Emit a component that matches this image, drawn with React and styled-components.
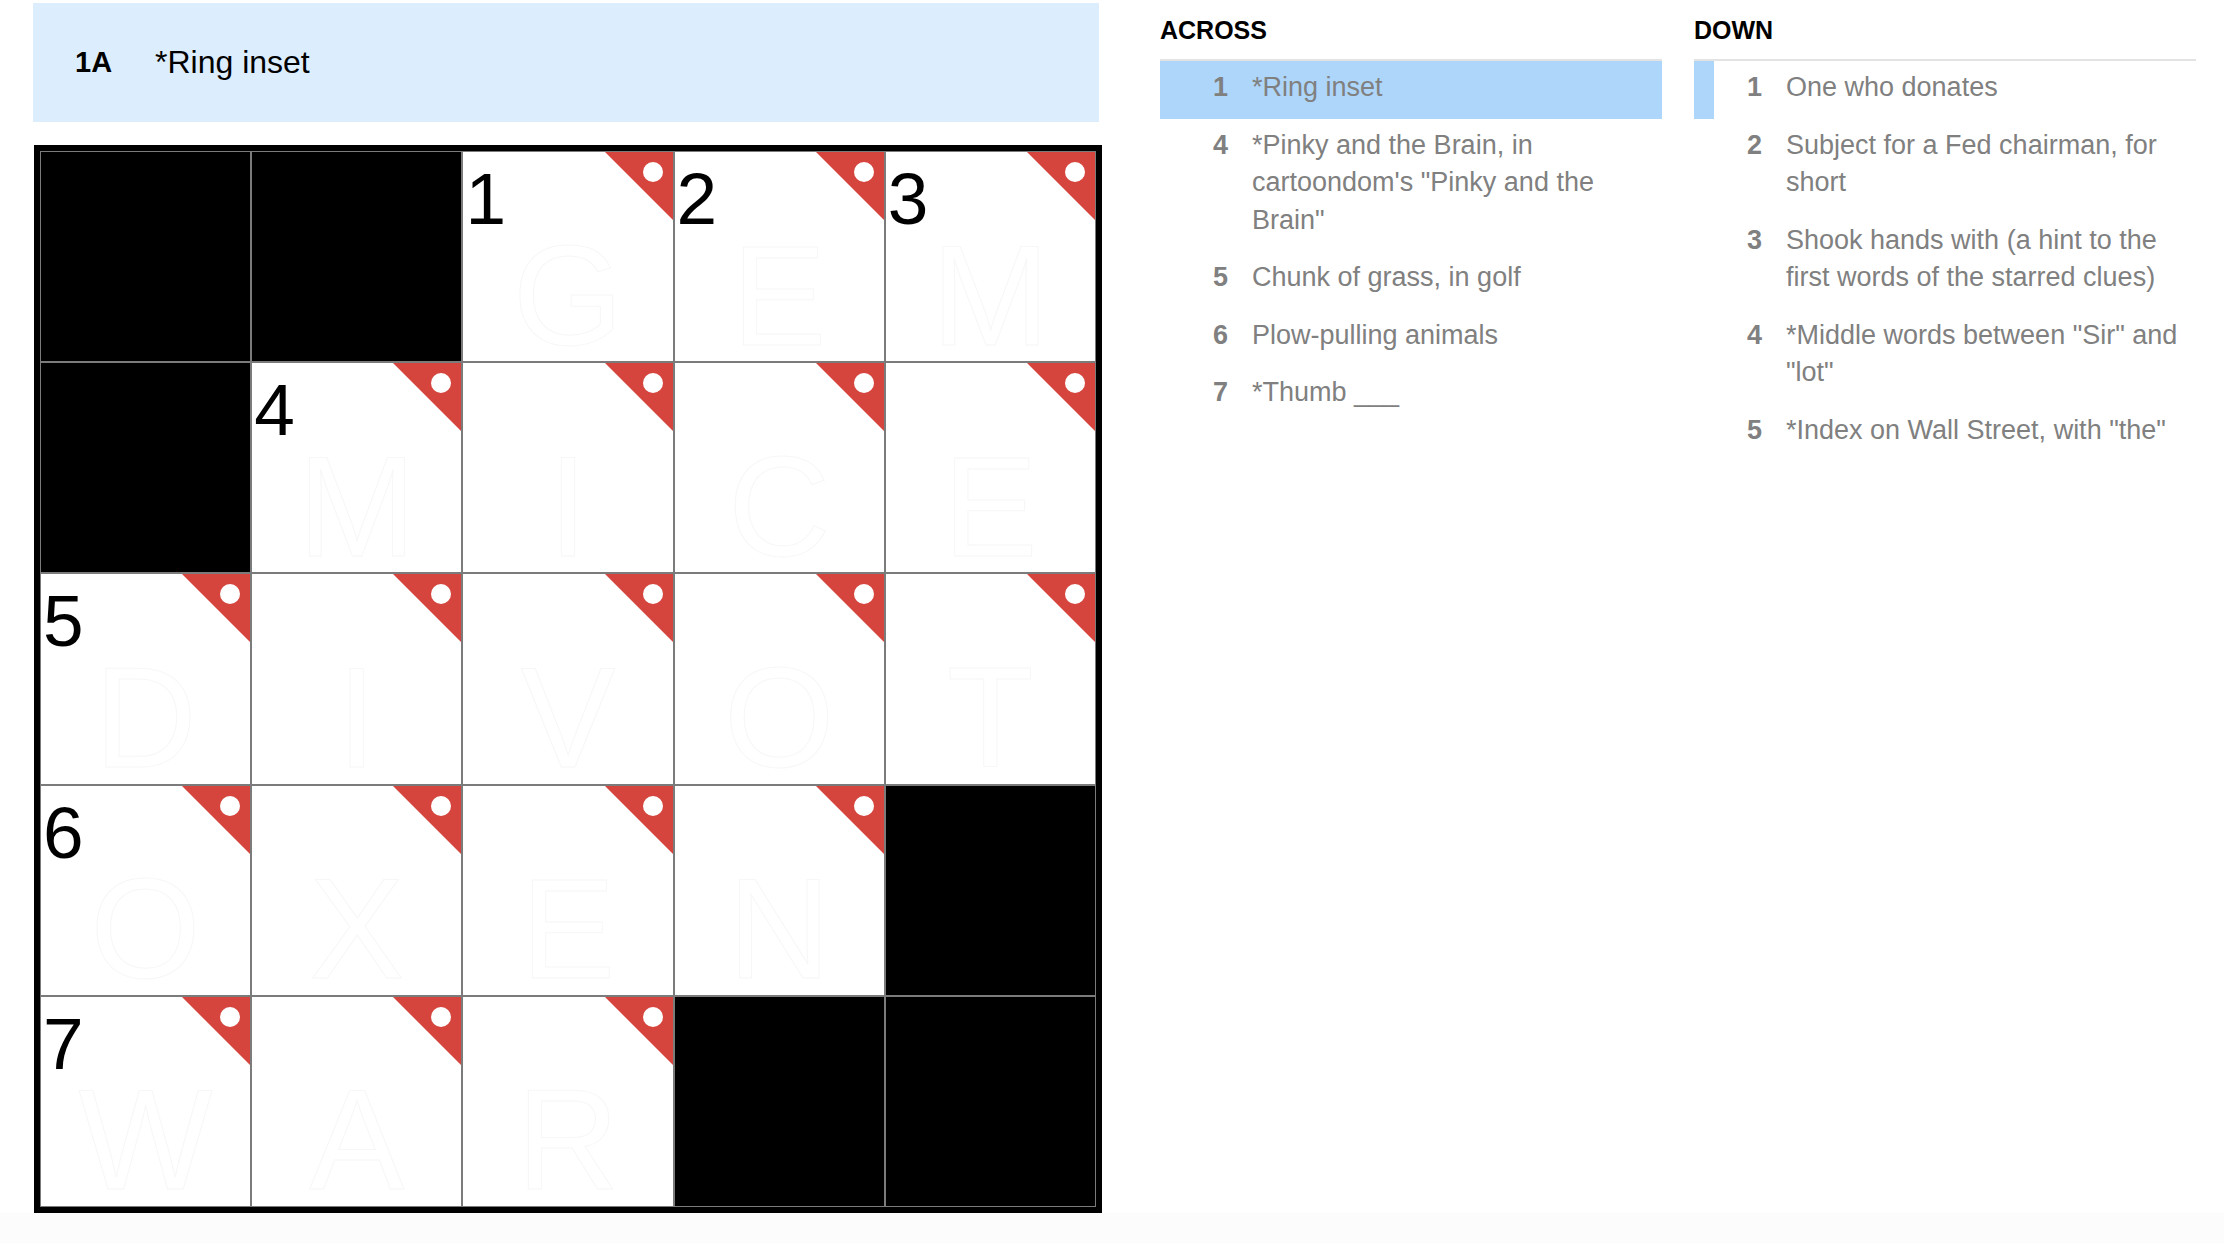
import React from 'react';
import styled, { createGlobalStyle } from 'styled-components';

const GlobalStyle = createGlobalStyle`
  html, body {
    margin: 0;
    padding: 0;
    background: #fcfcfc;
  }
  body {
    font-family: "Liberation Sans", Arial, sans-serif;
  }
`

const Page = styled.div`
  display: flex;
  align-items: flex-start;
  gap: 58px;
  padding: 3px 0 0 33px;
  background: #fff;
`

const LeftColumn = styled.div`
  display: flex;
  flex-direction: column;
  width: 1069px;
`

const ClueBar = styled.div`
  display: flex;
  align-items: center;
  box-sizing: border-box;
  width: 1066px;
  height: 119px;
  padding-left: 42px;
  background: #dcedfd;
  color: #000;
`

const BarNum = styled.span`
  width: 80px;
  font-size: 29px;
  font-weight: bold;
`

const BarText = styled.span`
  font-size: 32px;
`

const Board = styled.div`
  display: grid;
  grid-template-columns: repeat(5, 1fr);
  grid-template-rows: repeat(5, 1fr);
  width: 1056px;
  height: 1056px;
  margin: 23px 0 0 1px;
  border: 6px solid #000;
`

const Cell = styled.div`
  position: relative;
  display: flex;
  justify-content: center;
  align-items: flex-end;
  border: 1px solid #7b7b7b;
  background: ${p => (p.$block ? '#000' : '#fff')};
`

const CellNum = styled.span`
  position: absolute;
  top: 10px;
  left: 2px;
  font-size: 73px;
  line-height: 1;
  color: #000;
`

const Letter = styled.span`
  font-size: 142px;
  line-height: 0.92;
  color: #fff;
  -webkit-text-stroke: 1px #f7f7f7;
`

const Corner = styled.svg`
  position: absolute;
  top: 0;
  right: 0;
`

const Clues = styled.div`
  display: flex;
  gap: 32px;
  margin-top: -3px;
`

const ClueColumn = styled.section`
  width: 502px;
`

const ClueHead = styled.h3`
  margin: 15px 0 14px;
  font-size: 25px;
  line-height: 30px;
  font-weight: bold;
  color: #000;
`

const ClueList = styled.ol`
  margin: 0;
  padding: 0;
  list-style: none;
  border-top: 2px solid #e3e3e3;
`

const ClueItem = styled.li`
  display: grid;
  grid-template-columns: 68px 1fr;
  column-gap: 24px;
  padding: 8px 0 12px;
  font-size: 27px;
  line-height: 37.5px;
  color: #808080;
  background: ${p => (p.$active ? '#aed6fa' : 'transparent')};
  box-shadow: ${p => (p.$related ? 'inset 20px 0 0 #aed6fa' : 'none')};
`

const ClueNum = styled.span`
  font-weight: bold;
  text-align: right;
`

const grid = [
    ['#', '#', 'G', 'E', 'M'],
    ['#', 'M', 'I', 'C', 'E'],
    ['D', 'I', 'V', 'O', 'T'],
    ['O', 'X', 'E', 'N', '#'],
    ['W', 'A', 'R', '#', '#'],
]

const numbers = {
    '0-2': 1, '0-3': 2, '0-4': 3,
    '1-1': 4,
    '2-0': 5,
    '3-0': 6,
    '4-0': 7,
}

const across = [
    [1, '*Ring inset'],
    [4, '*Pinky and the Brain, in cartoondom\'s "Pinky and the Brain"'],
    [5, 'Chunk of grass, in golf'],
    [6, 'Plow-pulling animals'],
    [7, '*Thumb ___'],
]

const down = [
    [1, 'One who donates'],
    [2, 'Subject for a Fed chairman, for short'],
    [3, 'Shook hands with (a hint to the first words of the starred clues)'],
    [4, '*Middle words between "Sir" and "lot"'],
    [5, '*Index on Wall Street, with "the"'],
]

const CornerMark = () => (
    <Corner width="68" height="68" viewBox="0 0 68 68">
        <polygon points="0,0 68,0 68,68" fill="#d5453e"/>
        <circle cx="48" cy="20" r="10" fill="#fff"/>
    </Corner>
)

const App = () => {
    return (
        <>
            <GlobalStyle/>
            <Page>
                <LeftColumn>
                    <ClueBar>
                        <BarNum>1A</BarNum>
                        <BarText>*Ring inset</BarText>
                    </ClueBar>
                    <Board>
                        {grid.map((row, r) => row.map((ch, c) => {
                            const key = `${r}-${c}`
                            if (ch === '#') {
                                return <Cell key={key} $block/>
                            }
                            return (
                                <Cell key={key}>
                                    {numbers[key] ? <CellNum>{numbers[key]}</CellNum> : null}
                                    <CornerMark/>
                                    <Letter>{ch}</Letter>
                                </Cell>
                            )
                        }))}
                    </Board>
                </LeftColumn>
                <Clues>
                    <ClueColumn>
                        <ClueHead>ACROSS</ClueHead>
                        <ClueList>
                            {across.map(([n, text]) => (
                                <ClueItem key={n} $active={n === 1}>
                                    <ClueNum>{n}</ClueNum>
                                    <span>{text}</span>
                                </ClueItem>
                            ))}
                        </ClueList>
                    </ClueColumn>
                    <ClueColumn>
                        <ClueHead>DOWN</ClueHead>
                        <ClueList>
                            {down.map(([n, text]) => (
                                <ClueItem key={n} $related={n === 1}>
                                    <ClueNum>{n}</ClueNum>
                                    <span>{text}</span>
                                </ClueItem>
                            ))}
                        </ClueList>
                    </ClueColumn>
                </Clues>
            </Page>
        </>
    );
};

export default App;
